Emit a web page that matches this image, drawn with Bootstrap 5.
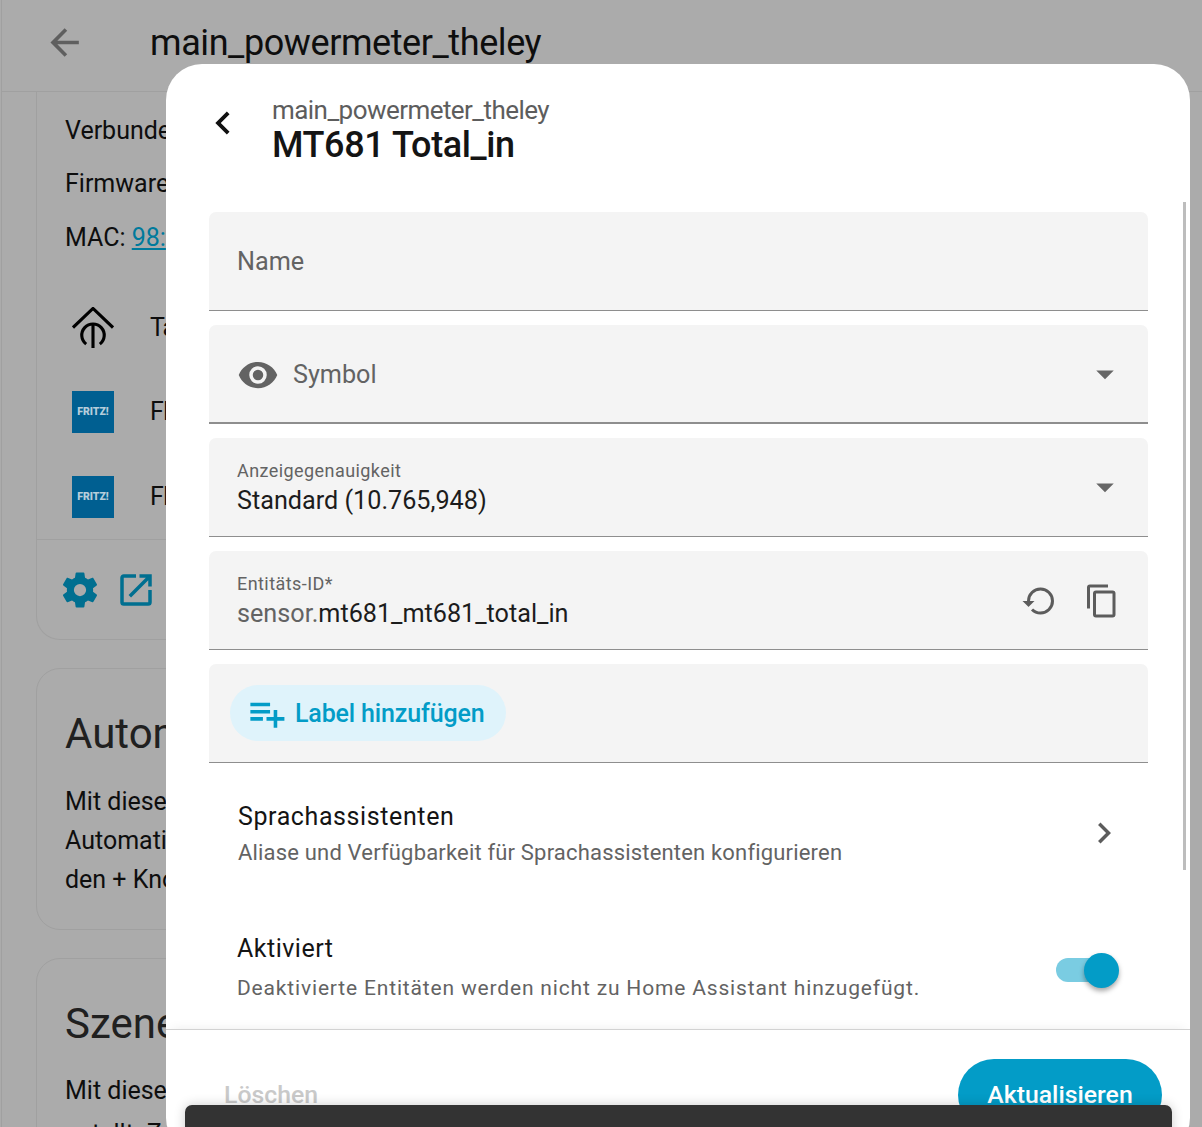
<!DOCTYPE html>
<html lang="de">
<head>
    <meta charset="UTF-8">
    <meta name="viewport" content="width=device-width, initial-scale=1.0">
    <title>main_powermeter_theley</title>
    <link rel="stylesheet" href="https://cdn.jsdelivr.net/npm/bootstrap@5.3.0/dist/css/bootstrap.min.css">
    <style>
        html, body { height: 100%; }
        body {
            background: #ababab;
            font-family: Roboto, "Liberation Sans", sans-serif;
            color: #141414;
            overflow: hidden;
        }
        /* page behind the dialog */
        .page-wrap { height: 1127px; overflow: hidden; margin-left: 1px; border-left: 1px solid #a0a0a0; }
        .top-bar { height: 92px; border-bottom: 1px solid #a0a0a0; padding: 0 0 5px 41px; gap: 64px; }
        .top-bar h1 { font-size: 36px; font-weight: 400; margin: 2px 0 0; letter-spacing: -.42px; color: #0e0e0e; }
        .back-arrow { width: 43px; height: 43px; fill: #5f5f5f; margin-top: -1px; }
        .bg-col { padding-left: 34px; width: 400px; }
        .bg-card { border: 1px solid #a0a0a0; border-radius: 24px; margin-bottom: 28px; padding-left: 28px; }
        .bg-card.first { border-top: 0; border-top-left-radius: 0; border-top-right-radius: 0; height: 548px; padding: 12px 0 0; }
        .bg-card.second { height: 262px; }
        .bg-card.third { height: 300px; }
        .bg-line { font-size: 25px; line-height: 34px; white-space: nowrap; color: #0e0e0e; }
        .gap-line { margin-bottom: 5px; }
        .gap-wide { margin-bottom: 9px; }
        .info-row { padding-left: 28px; height: 53.5px; }
        .dev-row { height: 84.5px; padding-left: 35px; gap: 36px; }
        .dev-row span { letter-spacing: -1px; }
        .dev-first { margin-top: 21px; }
        .dev-logo { width: 42px; height: 42px; background: #005f91; color: #b5cddb; font-size: 10.5px; font-weight: 900; }
        .dev-icon { width: 42px; height: 42px; }
        .card-actions { border-top: 1px solid #a0a0a0; height: 100px; padding-left: 22px; gap: 14px; }
        .card-actions svg { width: 42px; height: 42px; fill: #006f90; }
        .bg-title { font-size: 42px; line-height: 50px; color: #202020; padding-top: 40px; margin-bottom: 25px; white-space: nowrap; }
        .bg-card.second .bg-title { margin-bottom: 26px; }
        .bg-link { color: #007a9c; }

        /* dialog */
        .entity-dialog {
            position: absolute; left: 166px; top: 64px; width: 1024px; height: 1090px;
            background: #fff; border-radius: 36px; overflow: hidden;
        }
        .dlg-head { height: 148px; padding: 24px 0 0 34px; gap: 26px; }
        .dlg-head svg { width: 46px; height: 46px; fill: #111; margin-top: 12px; flex-shrink: 0; }
        .dlg-sub { font-size: 26px; line-height: 44px; letter-spacing: -.55px; color: #5d5d5d; }
        .dlg-title { font-size: 36px; line-height: 26px; font-weight: 500; letter-spacing: -.4px; color: #141414; }
        .dlg-body { padding: 0 42px 0 43px; height: 817px; }
        .field-box {
            height: 99px; margin-bottom: 14px; background: #f4f4f4;
            border-bottom: 1px solid #8e8e8e; border-radius: 7px 7px 0 0;
            padding: 2px 28px 0; font-size: 25.2px;
        }
        .field-box.thick { border-bottom-width: 2px; }
        .field-label { font-size: 18px; line-height: 24px; letter-spacing: .43px; color: #636363; }
        .field-value { font-size: 25.2px; line-height: 35px; color: #1c1c1c; }
        .muted-grey { color: #636363; }
        .caret-ico { width: 42px; height: 42px; fill: #666; margin: -2px -6px 0 0; }
        .eye-ico { width: 42px; height: 42px; fill: #636363; margin-right: 14px; }
        .act-ico { width: 36px; height: 36px; fill: #5c5c5c; }
        .restore-ico { margin-right: 3px; }
        .label-pill {
            background: #dff3fb; color: #039cc7; height: 56px; border: 0; padding: 2px 22px 0 19px; margin-top: -2px;
            font-size: 25px; font-weight: 500; letter-spacing: -.15px; gap: 9px; margin-left: -7px;
        }
        .label-pill svg { width: 43px; height: 43px; fill: #039cc7; margin-left: -4px; margin-right: -2px; margin-top: -2px; }
        .opt-row { padding: 0 28px; }
        .opt-title { font-size: 25px; line-height: 34px; letter-spacing: .5px; color: #141414; }
        .opt-text { font-size: 22px; line-height: 34px; color: #636363; white-space: nowrap; }
        .voice-row .opt-title { margin-left: 1px; letter-spacing: .6px; }
        .voice-row .opt-text { letter-spacing: .18px; padding: 2px 0 0 1px; }
        .voice-row .chev-ico { margin-top: -4px; }
        .active-row .opt-text { font-size: 21px; letter-spacing: .83px; padding-top: 5px; }
        .chev-ico { width: 42px; height: 42px; fill: #5c5c5c; margin-right: -5px; }
        .toggle-track { width: 62px; height: 24px; background: #7accE2; border-radius: 12px; margin: 3px 2px 0 0; }
        .toggle-knob {
            position: absolute; right: -1px; top: -5.5px; width: 35px; height: 35px; border-radius: 50%;
            background: #039cc7; box-shadow: 0 3px 5px rgba(0,0,0,.35);
        }
        .dlg-scroll {
            position: absolute; right: 4px; top: 138px; width: 3px; height: 668px; background: #bdbdbd;
        }
        .dlg-foot {
            border-top: 1px solid #d2d2d2; box-shadow: 0 -6px 10px -6px rgba(0,0,0,.08);
            padding: 29px 28px 0 58px; height: 125px;
        }
        .del-text { font-size: 24.8px; font-weight: 500; color: #c9c9c9; background: none; border: 0; padding: 0; margin-top: 17px; }
        .save-btn {
            background: #039cc7; color: #fff; border: 0; width: 204px; height: 72px;
            font-size: 24.8px; font-weight: 500;
        }
        .snack-bar {
            position: absolute; left: 185px; top: 1105px; width: 987px; height: 60px;
            background: #333; border-radius: 7px; box-shadow: 0 0 12px rgba(0,0,0,.2);
        }
    </style>
</head>
<body>
    <div class="page-wrap">
        <div class="top-bar d-flex align-items-center">
            <svg class="back-arrow" viewBox="0 0 24 24"><path d="M20,11V13H8L13.5,18.5L12.08,19.92L4.16,12L12.08,4.08L13.5,5.5L8,11H20Z"/></svg>
            <h1>main_powermeter_theley</h1>
        </div>
        <div class="bg-col">
            <div class="bg-card first">
                <div class="info-row d-flex align-items-center bg-line">Verbunden</div>
                <div class="info-row d-flex align-items-center bg-line">Firmware</div>
                <div class="info-row d-flex align-items-center bg-line">MAC:&nbsp;<u class="bg-link">98:</u></div>
                <div class="dev-row dev-first d-flex align-items-center bg-line">
                    <svg class="dev-icon" viewBox="0 0 43 43" fill="none" stroke="#000" stroke-width="3.2">
                        <path d="M1 21L21.5 1.5L42 21"/>
                        <path d="M14.5 38A11.5 11.5 0 1 1 28.5 38"/>
                        <path d="M21.5 17V42"/>
                    </svg>
                    <span>Ta</span>
                </div>
                <div class="dev-row d-flex align-items-center bg-line">
                    <div class="dev-logo d-flex align-items-center justify-content-center">FRITZ!</div>
                    <span>FI</span>
                </div>
                <div class="dev-row d-flex align-items-center bg-line">
                    <div class="dev-logo d-flex align-items-center justify-content-center">FRITZ!</div>
                    <span>FI</span>
                </div>
                <div class="card-actions d-flex align-items-center">
                    <svg viewBox="0 0 24 24"><path d="M12,15.5A3.5,3.5 0 0,1 8.5,12A3.5,3.5 0 0,1 12,8.5A3.5,3.5 0 0,1 15.5,12A3.5,3.5 0 0,1 12,15.5M19.43,12.97C19.47,12.65 19.5,12.33 19.5,12C19.5,11.67 19.47,11.34 19.43,11L21.54,9.37C21.73,9.22 21.78,8.95 21.66,8.73L19.66,5.27C19.54,5.05 19.27,4.96 19.05,5.05L16.56,6.05C16.04,5.66 15.5,5.32 14.87,5.07L14.5,2.42C14.46,2.18 14.25,2 14,2H10C9.75,2 9.54,2.18 9.5,2.42L9.13,5.07C8.5,5.32 7.96,5.66 7.44,6.05L4.95,5.05C4.73,4.96 4.46,5.05 4.34,5.27L2.34,8.73C2.21,8.95 2.27,9.22 2.46,9.37L4.57,11C4.53,11.34 4.5,11.67 4.5,12C4.5,12.33 4.53,12.65 4.57,12.97L2.46,14.63C2.27,14.78 2.21,15.05 2.34,15.27L4.34,18.73C4.46,18.95 4.73,19.03 4.95,18.95L7.44,17.94C7.96,18.34 8.5,18.68 9.13,18.93L9.5,21.58C9.54,21.82 9.75,22 10,22H14C14.25,22 14.46,21.82 14.5,21.58L14.87,18.93C15.5,18.67 16.04,18.34 16.56,17.94L19.05,18.95C19.27,19.03 19.54,18.95 19.66,18.73L21.66,15.27C21.78,15.05 21.73,14.78 21.54,14.63L19.43,12.97Z"/></svg>
                    <svg viewBox="0 0 24 24"><path d="M14,3V5H17.59L7.76,14.83L9.17,16.24L19,6.41V10H21V3M19,19H5V5H12V3H5C3.89,3 3,3.9 3,5V19A2,2 0 0,0 5,21H19A2,2 0 0,0 21,19V12H19V19Z"/></svg>
                </div>
            </div>
            <div class="bg-card second">
                <div class="bg-title">Autom</div>
                <div class="bg-line gap-line">Mit diese</div>
                <div class="bg-line gap-line">Automati</div>
                <div class="bg-line">den + Kno</div>
            </div>
            <div class="bg-card third">
                <div class="bg-title">Szene</div>
                <div class="bg-line gap-wide">Mit diese</div>
                <div class="bg-line">entellt. Z</div>
            </div>
        </div>
    </div>

    <div class="entity-dialog d-flex flex-column">
        <div class="dlg-head d-flex">
            <svg viewBox="0 0 24 24"><path d="M15.41,16.58L10.83,12L15.41,7.41L14,6L8,12L14,18L15.41,16.58Z"/></svg>
            <div>
                <div class="dlg-sub">main_powermeter_theley</div>
                <div class="dlg-title">MT681 Total_in</div>
            </div>
        </div>
        <div class="dlg-body">
            <div class="field-box d-flex align-items-center muted-grey">Name</div>
            <div class="field-box thick d-flex align-items-center muted-grey">
                <svg class="eye-ico" viewBox="0 0 24 24"><path d="M12,9A3,3 0 0,0 9,12A3,3 0 0,0 12,15A3,3 0 0,0 15,12A3,3 0 0,0 12,9M12,17A5,5 0 0,1 7,12A5,5 0 0,1 12,7A5,5 0 0,1 17,12A5,5 0 0,1 12,17M12,4.5C7,4.5 2.73,7.61 1,12C2.73,16.39 7,19.5 12,19.5C17,19.5 21.27,16.39 23,12C21.27,7.61 17,4.5 12,4.5Z"/></svg>
                <span class="flex-grow-1">Symbol</span>
                <svg class="caret-ico" viewBox="0 0 24 24"><path d="M7,10L12,15L17,10H7Z"/></svg>
            </div>
            <div class="field-box d-flex align-items-center">
                <div class="flex-grow-1">
                    <div class="field-label">Anzeigegenauigkeit</div>
                    <div class="field-value">Standard (10.765,948)</div>
                </div>
                <svg class="caret-ico" viewBox="0 0 24 24"><path d="M7,10L12,15L17,10H7Z"/></svg>
            </div>
            <div class="field-box d-flex align-items-center gap-4">
                <div class="flex-grow-1">
                    <div class="field-label">Entitäts-ID*</div>
                    <div class="field-value"><span class="muted-grey">sensor.</span>mt681_mt681_total_in</div>
                </div>
                <svg class="act-ico restore-ico" viewBox="0 0 24 24"><path d="M13,3A9,9 0 0,0 4,12H1L4.89,15.89L4.96,16.03L9,12H6A7,7 0 0,1 13,5A7,7 0 0,1 20,12A7,7 0 0,1 13,19C11.07,19 9.32,18.21 8.06,16.94L6.64,18.36C8.27,20 10.5,21 13,21A9,9 0 0,0 22,12A9,9 0 0,0 13,3Z"/></svg>
                <svg class="act-ico" viewBox="0 0 24 24"><path d="M19,21H8V7H19M19,5H8A2,2 0 0,0 6,7V21A2,2 0 0,0 8,23H19A2,2 0 0,0 21,21V7A2,2 0 0,0 19,5M16,1H4A2,2 0 0,0 2,3V17H4V3H16V1Z"/></svg>
            </div>
            <div class="field-box d-flex align-items-center mb-0">
                <button type="button" class="btn label-pill rounded-pill d-flex align-items-center">
                    <svg viewBox="0 0 24 24"><path d="M3 16H10V14H3M18 14V10H16V14H12V16H16V20H18V16H22V14M14 6H3V8H14M14 10H3V12H14V10Z"/></svg>
                    Label hinzufügen
                </button>
            </div>
            <div class="opt-row voice-row d-flex align-items-center" style="padding-top:37px">
                <div class="flex-grow-1">
                    <div class="opt-title">Sprachassistenten</div>
                    <div class="opt-text">Aliase und Verfügbarkeit für Sprachassistenten konfigurieren</div>
                </div>
                <svg class="chev-ico" viewBox="0 0 24 24"><path d="M8.59,16.58L13.17,12L8.59,7.41L10,6L16,12L10,18L8.59,16.58Z"/></svg>
            </div>
            <div class="opt-row active-row d-flex align-items-center" style="padding-top:62px">
                <div class="flex-grow-1">
                    <div class="opt-title">Aktiviert</div>
                    <div class="opt-text">Deaktivierte Entitäten werden nicht zu Home Assistant hinzugefügt.</div>
                </div>
                <div class="toggle-track position-relative"><div class="toggle-knob"></div></div>
            </div>
        </div>
        <div class="dlg-foot d-flex justify-content-between align-items-start">
            <button type="button" class="del-text">Löschen</button>
            <button type="button" class="btn save-btn rounded-pill">Aktualisieren</button>
        </div>
        <div class="dlg-scroll"></div>
    </div>
    <div class="snack-bar"></div>
    <script src="https://cdn.jsdelivr.net/npm/bootstrap@5.3.0/dist/js/bootstrap.bundle.min.js"></script>
</body>
</html>
